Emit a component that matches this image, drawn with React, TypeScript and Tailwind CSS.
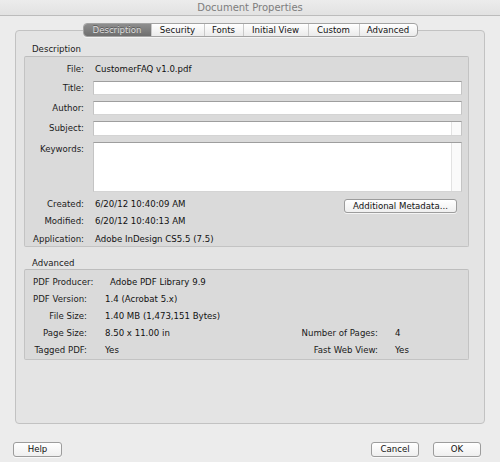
import React from 'react';

const tabs = [
  { label: 'Description', width: 'w-[67px]', active: true },
  { label: 'Security', width: 'w-[53px]' },
  { label: 'Fonts', width: 'w-[39px]' },
  { label: 'Initial View', width: 'w-[65px]' },
  { label: 'Custom', width: 'w-[51px]' },
  { label: 'Advanced', width: 'w-[58px]' },
];

const MacButton: React.FC<{ className?: string; children: React.ReactNode }> = ({ className = '', children }) => (
  <button
    className={`flex items-center justify-center rounded-[3px] border border-[#9c9c9c] bg-gradient-to-b from-[#ffffff] to-[#efefef] text-[#111] leading-none shadow-[0_1px_0_rgba(255,255,255,0.7)] ${className}`}
  >
    {children}
  </button>
);

const Field: React.FC<{ className?: string; strip?: boolean }> = ({ className = '', strip }) => (
  <div
    className={`ml-[9px] flex-1 flex justify-end bg-white border border-t-[#9e9e9e] border-x-[#c4c4c4] border-b-[#d4d4d4] ${className}`}
  >
    {strip && <div className="w-[10px] h-full border-l border-[#e2e2e2] bg-[#fafafa]" />}
  </div>
);

const DescRow: React.FC<{ label: string; className?: string; children: React.ReactNode }> = ({ label, className = '', children }) => (
  <div className={`flex items-center ${className}`}>
    <div className="w-[59px] text-right whitespace-nowrap text-[#1a1a1a]">{label}</div>
    {children}
  </div>
);

const advancedRows = [
  { label: 'PDF Producer:', value: 'Adobe PDF Library 9.9', wide: true },
  { label: 'PDF Version:', value: '1.4 (Acrobat 5.x)' },
  { label: 'File Size:', value: '1.40 MB (1,473,151 Bytes)' },
  { label: 'Page Size:', value: '8.50 x 11.00 in', rightLabel: 'Number of Pages:', rightValue: '4' },
  { label: 'Tagged PDF:', value: 'Yes', rightLabel: 'Fast Web View:', rightValue: 'Yes' },
];

export default function App() {
  return (
    <div className="w-[500px] h-[462px] flex flex-col bg-[#ececec] text-[8.6px] leading-none text-[#111] font-['DejaVu_Sans',sans-serif] overflow-hidden">
      {/* Title bar */}
      <div className="h-[16px] flex-none flex items-center justify-center border-b border-[#bcbcbc] bg-gradient-to-b from-[#ececec] to-[#e2e2e2] text-[10px] text-[#7d7d7d]">
        Document Properties
      </div>

      {/* Tabs */}
      <div className="mt-[7px] flex justify-center relative z-10">
        <div className="flex h-[14px] rounded-[4px] border border-[#a3a3a3] overflow-hidden bg-gradient-to-b from-[#ffffff] to-[#ebebeb] shadow-[0_1px_0_rgba(255,255,255,0.6)]">
          {tabs.map((t, i) => (
            <div
              key={t.label}
              className={`${t.width} flex items-center justify-center whitespace-nowrap ${i > 0 ? 'border-l border-[#c9c9c9]' : ''} ${
                t.active
                  ? 'bg-gradient-to-b from-[#8e8e8e] to-[#6f6f6f] text-[#dedede] [text-shadow:0_-1px_0_rgba(0,0,0,0.35)]'
                  : 'text-[#111]'
              }`}
            >
              {t.label}
            </div>
          ))}
        </div>
      </div>

      {/* Panel */}
      <div className="mx-[15px] -mt-[7px] h-[394px] flex-none rounded-[4px] border border-[#c2c2c2] bg-[#e4e4e4] pt-[12px] pl-[8px] pr-[15px]">
        <div className="h-[12px] flex items-center pl-[8px] text-[#1a1a1a]">Description</div>
        <div className="mt-[1px] border border-[#c3c3c3] border-t-[#bdbdbd] bg-[#dadada] pt-[5px] pr-[6px] rounded-[2px]">
          <DescRow label="File:" className="h-[14px]">
            <span className="ml-[11px]">CustomerFAQ v1.0.pdf</span>
          </DescRow>
          <DescRow label="Title:" className="mt-[5px] h-[14px]">
            <Field className="h-[14px]" />
          </DescRow>
          <DescRow label="Author:" className="mt-[6px] h-[14px]">
            <Field className="h-[14px]" />
          </DescRow>
          <DescRow label="Subject:" className="mt-[6px] h-[15px]">
            <Field className="h-[15px]" strip />
          </DescRow>
          <div className="mt-[6px] flex items-start">
            <div className="w-[59px] text-right text-[#1a1a1a] pt-[3px]">Keywords:</div>
            <Field className="h-[50px]" strip />
          </div>
          <DescRow label="Created:" className="mt-[5px] h-[14px]">
            <span className="ml-[11px]">6/20/12 10:40:09 AM</span>
            <MacButton className="ml-auto mr-[5px] mt-[4px] w-[113px] h-[14px]">Additional Metadata...</MacButton>
          </DescRow>
          <DescRow label="Modified:" className="mt-[3px] h-[14px]">
            <span className="ml-[11px]">6/20/12 10:40:13 AM</span>
          </DescRow>
          <DescRow label="Application:" className="mt-[4px] h-[14px]">
            <span className="ml-[11px]">Adobe InDesign CS5.5 (7.5)</span>
          </DescRow>
        </div>

        <div className="mt-[10px] h-[12px] flex items-center pl-[8px] text-[#1a1a1a]">Advanced</div>
        <div className="border border-[#c3c3c3] border-t-[#bdbdbd] bg-[#dadada] pt-[4px] rounded-[2px]">
          {advancedRows.map((r) => (
            <div key={r.label} className="h-[17px] flex items-center">
              {r.wide ? (
                <div className="w-[62px] pl-[8px] whitespace-nowrap text-[#1a1a1a]">{r.label}</div>
              ) : (
                <div className="w-[62px] text-right whitespace-nowrap text-[#1a1a1a]">{r.label}</div>
              )}
              <span className={r.wide ? 'ml-[23px]' : 'ml-[18px]'}>{r.value}</span>
              {r.rightLabel && (
                <>
                  <div className="ml-auto text-right whitespace-nowrap text-[#1a1a1a]">{r.rightLabel}</div>
                  <div className="w-[90px] pl-[17px]">{r.rightValue}</div>
                </>
              )}
            </div>
          ))}
        </div>
      </div>

      {/* Footer buttons */}
      <div className="mt-[18px] flex pl-[13px] pr-[19px]">
        <MacButton className="w-[49px] h-[15px]">Help</MacButton>
        <MacButton className="ml-auto w-[48px] h-[15px]">Cancel</MacButton>
        <MacButton className="ml-[14px] w-[48px] h-[15px]">OK</MacButton>
      </div>
    </div>
  );
}
